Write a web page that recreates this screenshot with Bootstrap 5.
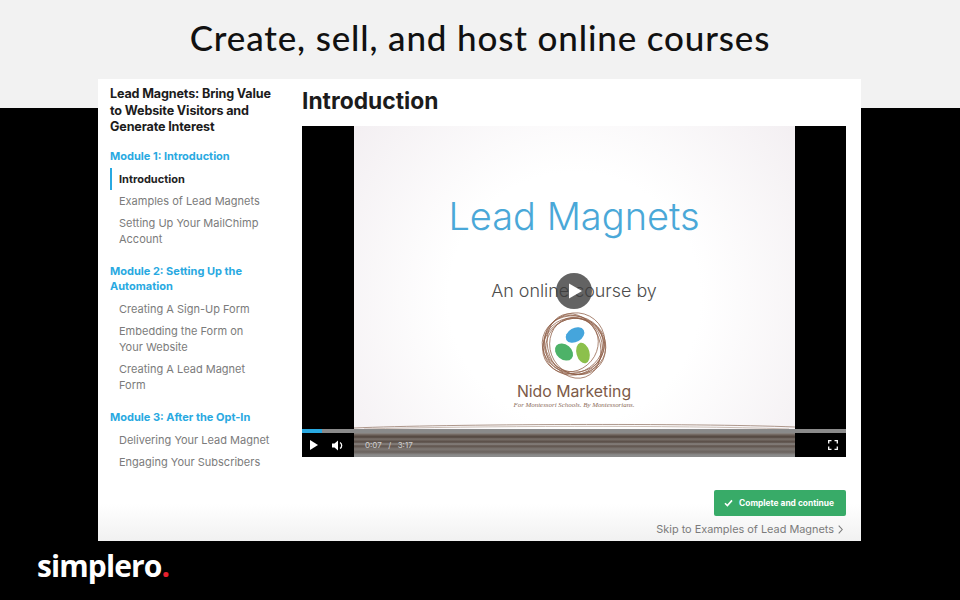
<!DOCTYPE html>
<html lang="en">
  <head>
    <meta charset="UTF-8" />
    <meta name="viewport" content="width=device-width, initial-scale=1.0" />
    <title>Simplero</title>
    <link
      rel="stylesheet"
      href="https://cdn.jsdelivr.net/npm/bootstrap@5.3.1/dist/css/bootstrap.min.css"
    />
    <style>
      body {
        background: #000;
        height: 600px;
        overflow: hidden;
        font-family: "Inter", "Liberation Sans", sans-serif;
      }
      .topBand {
        height: 108px;
        background: #f2f2f2;
        padding-top: 15px;
        font-family: "Lato", "Liberation Sans", sans-serif;
        font-size: 35px;
        line-height: 44px;
        font-weight: 500;
        color: #111;
        letter-spacing: 0.85px;
      }
      .coursePanel {
        width: 763px;
        height: 462px;
        margin: -29px 0 0 98px;
        background: linear-gradient(#fff 92%, #f1f1f1);
      }
      .sideCol {
        width: 203px;
        padding: 7px 0 0 12px;
      }
      .courseTitle {
        font-size: 12.6px;
        line-height: 16.6px;
        font-weight: 700;
        color: #1c1c1c;
        margin: 0 0 13px;
        letter-spacing: -0.15px;
        width: 165px;
      }
      .moduleName {
        font-size: 11px;
        line-height: 15px;
        font-weight: 700;
        color: #29a9e1;
        margin: 0 0 4px;
        width: 165px;
      }
      .lessonList {
        list-style: none;
        padding: 0;
        margin: 0 0 14px;
      }
      .lessonItem {
        font-size: 11px;
        line-height: 16px;
        color: #7b7b7b;
        padding: 3px 0 3px 7px;
        border-left: 2px solid transparent;
        width: 165px;
      }
      .lessonItem.current {
        color: #222;
        font-weight: 700;
        border-left-color: #29a9e1;
      }
      .mainCol {
        width: 544px;
        margin-left: 1px;
      }
      .lessonHeading {
        font-size: 22.8px;
        line-height: 28px;
        font-weight: 700;
        color: #1c1c1c;
        margin: 8px 0 11px;
      }
      .videoBox {
        height: 331px;
        background: #000;
      }
      .slideArea {
        width: 441px;
        height: 100%;
        overflow: hidden;
        padding-top: 69px;
        background: radial-gradient(circle at 50% 52%, #fff 45%, #f3eff2 100%);
      }
      .slideTitle {
        font-size: 38px;
        line-height: 42px;
        font-weight: 300;
        color: #4aa8d8;
      }
      .slideBy {
        font-size: 17.9px;
        line-height: 22px;
        font-weight: 300;
        color: #4d4d4d;
        margin-top: 43px;
      }
      .nestLogo {
        display: block;
        margin-top: 7px;
      }
      .nidoName {
        font-size: 15.8px;
        line-height: 18px;
        color: #7d5a48;
        margin-top: 2px;
      }
      .nidoTag {
        font-family: "Liberation Serif", serif;
        font-style: italic;
        font-size: 6.9px;
        line-height: 7px;
        color: #8a6a58;
      }
      .playBig {
        width: 36px;
        height: 36px;
        top: 147px;
        left: 254px;
        background: rgba(60, 60, 60, 0.8);
      }
      .controlBar {
        left: 0;
        right: 0;
        bottom: 0;
        height: 28px;
      }
      .seekTrack {
        height: 4px;
        background: #8a8a8a;
      }
      .seekFill {
        height: 100%;
        background: #29a9e1;
      }
      .controlRow {
        height: 24px;
        padding: 0 8px;
      }
      .muteIcon {
        margin-left: 14px;
      }
      .streaks {
        left: 52px;
        width: 441px;
        top: 4px;
        bottom: 0;
        background: linear-gradient(
          #8f8b88 0,
          #6b5f58 2px,
          #4f433c 4px,
          #7a716b 6px,
          #574b44 9px,
          #8a8582 11px,
          #5f534c 13px,
          #7d7773 16px,
          #6a625d 19px,
          #8b8b8b 22px,
          #8b8b8b 24px
        );
      }
      .streaksTop {
        left: 52px;
        width: 441px;
        bottom: 28px;
        height: 7px;
      }
      .timeText {
        font-size: 8px;
        color: #d0d0d0;
        left: 63px;
        top: 11px;
        line-height: 10px;
        word-spacing: 1px;
      }
      .actionRow {
        margin-top: 33px;
      }
      .btn.completeBtn {
        width: 132px;
        height: 26px;
        background: #38ab68;
        border: 0;
        border-radius: 2px;
        color: #fff;
        font-size: 8.4px;
        font-weight: 700;
        padding: 0 2px 0 0;
        gap: 6px;
      }
      .skipLink {
        font-size: 10.9px;
        line-height: 14px;
        color: #7b7b7b;
        margin-top: 6px;
        padding-right: 3px;
      }
      .brandLogo {
        padding: 6px 0 0 37px;
        font-family: "Open Sans", "Liberation Sans", sans-serif;
        font-size: 30px;
        line-height: 38px;
        font-weight: 700;
        color: #fff;
        letter-spacing: -0.9px;
      }
      .brandDot {
        color: #e8202e;
      }
    </style>
  </head>
  <body>
    <div class="topBand text-center">Create, sell, and host online courses</div>

    <div class="coursePanel d-flex">
      <div class="sideCol">
        <p class="courseTitle">Lead Magnets: Bring Value to Website Visitors and Generate Interest</p>

        <p class="moduleName">Module 1: Introduction</p>
        <ul class="lessonList">
          <li class="lessonItem current">Introduction</li>
          <li class="lessonItem">Examples of Lead Magnets</li>
          <li class="lessonItem">Setting Up Your MailChimp Account</li>
        </ul>

        <p class="moduleName">Module 2: Setting Up the Automation</p>
        <ul class="lessonList">
          <li class="lessonItem">Creating A Sign-Up Form</li>
          <li class="lessonItem">Embedding the Form on<br />Your Website</li>
          <li class="lessonItem">Creating A Lead Magnet<br />Form</li>
        </ul>

        <p class="moduleName">Module 3: After the Opt-In</p>
        <ul class="lessonList">
          <li class="lessonItem">Delivering Your Lead Magnet</li>
          <li class="lessonItem">Engaging Your Subscribers</li>
        </ul>
      </div>

      <div class="mainCol">
        <h1 class="lessonHeading">Introduction</h1>

        <div class="videoBox position-relative d-flex justify-content-center">
          <div class="slideArea d-flex flex-column align-items-center text-center">
            <div class="slideTitle">Lead Magnets</div>
            <div class="slideBy">An online course by</div>
            <svg class="nestLogo" width="72" height="72" viewBox="0 0 72 72">
              <g fill="none" stroke="#8f5f48" stroke-width="0.7">
                <ellipse cx="36" cy="36" rx="32" ry="29" transform="rotate(15 36 36)" />
                <ellipse cx="36" cy="35" rx="30" ry="32" transform="rotate(40 36 35)" />
                <ellipse cx="35" cy="37" rx="31" ry="27" transform="rotate(-25 35 37)" />
                <ellipse cx="37" cy="36" rx="28" ry="32" transform="rotate(-50 37 36)" />
                <ellipse cx="36" cy="37" rx="33" ry="26" transform="rotate(70 36 37)" />
                <ellipse cx="36" cy="36" rx="27" ry="30" transform="rotate(100 36 36)" />
                <ellipse cx="34" cy="36" rx="28" ry="25" transform="rotate(130 34 36)" />
                <ellipse cx="38" cy="37" rx="26" ry="29" transform="rotate(160 38 37)" />
              </g>
              <ellipse cx="37" cy="26" rx="10" ry="7" fill="#45a5dc" transform="rotate(-30 37 26)" />
              <ellipse cx="26" cy="43" rx="10" ry="7.5" fill="#4db268" transform="rotate(40 26 43)" />
              <ellipse cx="45" cy="44" rx="6.5" ry="10.5" fill="#8cc04c" transform="rotate(-15 45 44)" />
            </svg>
            <div class="nidoName">Nido Marketing</div>
            <div class="nidoTag">For Montessori Schools. By Montessorians.</div>
          </div>

          <div class="playBig position-absolute rounded-circle d-flex align-items-center justify-content-center">
            <svg width="18" height="18" viewBox="0 0 18 18"><path d="M4 1.5 17 9 4 16.5z" fill="#fff" /></svg>
          </div>

          <svg class="streaksTop position-absolute" viewBox="0 0 441 7" preserveAspectRatio="none">
            <path d="M0 6C90 2 340 1 441 5" fill="none" stroke="#9a7f70" stroke-width="0.8" />
            <path d="M10 7C120 4 320 3 435 7" fill="none" stroke="#bfaea4" stroke-width="0.8" />
          </svg>

          <div class="controlBar position-absolute">
            <div class="streaks position-absolute"></div>
            <div class="seekTrack position-relative"><div class="seekFill" style="width: 3.7%"></div></div>
            <div class="controlRow position-relative d-flex align-items-center">
              <svg width="8" height="10" viewBox="0 0 8 10"><path d="M0 0 8 5 0 10z" fill="#fff" /></svg>
              <svg class="muteIcon" width="12" height="11" viewBox="0 0 12 11">
                <path d="M0 3.5h2.5L6 .5v10L2.5 7.5H0z" fill="#fff" />
                <path d="M8 2.5a3.5 3.5 0 0 1 0 6" fill="none" stroke="#fff" stroke-width="1.3" />
              </svg>
              <svg class="ms-auto" width="10" height="10" viewBox="0 0 10 10">
                <path d="M.7 3.5V.7h2.8M6.5.7h2.8v2.8M9.3 6.5v2.8H6.5M3.5 9.3H.7V6.5" fill="none" stroke="#fff" stroke-width="1.3" />
              </svg>
            </div>
            <div class="timeText position-absolute">0:07 &nbsp;/&nbsp; 3:17</div>
          </div>
        </div>

        <div class="actionRow d-flex flex-column align-items-end">
          <button type="button" class="btn completeBtn d-flex align-items-center justify-content-center">
            <svg width="9" height="8" viewBox="0 0 9 8"><path d="M1 4.2 3.4 6.6 8 1.4" fill="none" stroke="#fff" stroke-width="1.6" /></svg>
            Complete and continue
          </button>
          <div class="skipLink d-flex align-items-center gap-1">
            Skip to Examples of Lead Magnets
            <svg width="5" height="9" viewBox="0 0 5 9"><path d="M.7.7 4.2 4.5.7 8.3" fill="none" stroke="#7b7b7b" stroke-width="1.1" /></svg>
          </div>
        </div>
      </div>
    </div>

    <div class="brandLogo">simplero<span class="brandDot">.</span></div>

    <script src="https://cdn.jsdelivr.net/npm/bootstrap@5.3.1/dist/js/bootstrap.bundle.min.js"></script>
  </body>
</html>
